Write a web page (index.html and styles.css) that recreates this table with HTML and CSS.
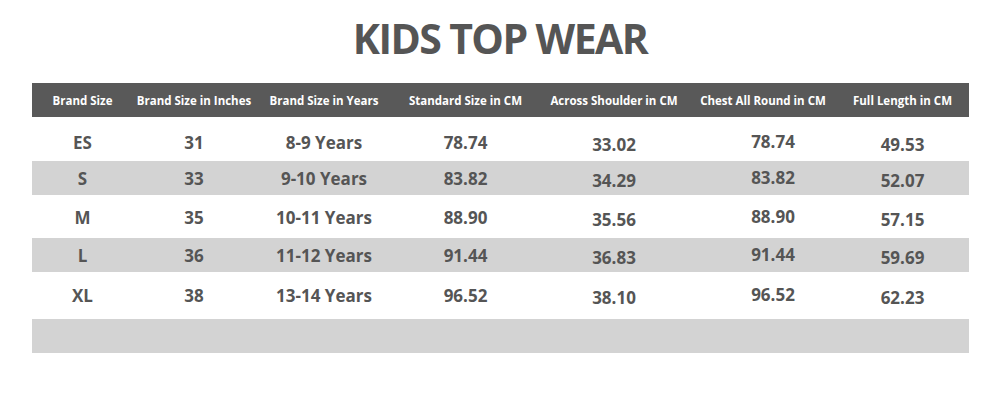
FILE: index.html
```html
<!DOCTYPE html>
<html>
<head>
<meta charset="utf-8">
<link rel="stylesheet" href="styles.css">
</head>
<body>
<div class="page">
  <h1 class="title">KIDS TOP WEAR</h1>
  <div class="table">
    <div class="row head">
      <div class="cell">Brand Size</div>
      <div class="cell">Brand Size in Inches</div>
      <div class="cell">Brand Size in Years</div>
      <div class="cell">Standard Size in CM</div>
      <div class="cell">Across Shoulder in CM</div>
      <div class="cell">Chest All Round in CM</div>
      <div class="cell">Full Length in CM</div>
    </div>
    <div class="row data r1">
      <div class="cell">ES</div>
      <div class="cell">31</div>
      <div class="cell">8-9 Years</div>
      <div class="cell">78.74</div>
      <div class="cell low">33.02</div>
      <div class="cell chest">78.74</div>
      <div class="cell low">49.53</div>
    </div>
    <div class="row data shade r2">
      <div class="cell">S</div>
      <div class="cell">33</div>
      <div class="cell">9-10 Years</div>
      <div class="cell">83.82</div>
      <div class="cell low">34.29</div>
      <div class="cell chest">83.82</div>
      <div class="cell low">52.07</div>
    </div>
    <div class="row data r3">
      <div class="cell">M</div>
      <div class="cell">35</div>
      <div class="cell">10-11 Years</div>
      <div class="cell">88.90</div>
      <div class="cell low">35.56</div>
      <div class="cell chest">88.90</div>
      <div class="cell low">57.15</div>
    </div>
    <div class="row data shade r4">
      <div class="cell">L</div>
      <div class="cell">36</div>
      <div class="cell">11-12 Years</div>
      <div class="cell">91.44</div>
      <div class="cell low">36.83</div>
      <div class="cell chest">91.44</div>
      <div class="cell low">59.69</div>
    </div>
    <div class="row data r5">
      <div class="cell">XL</div>
      <div class="cell">38</div>
      <div class="cell">13-14 Years</div>
      <div class="cell">96.52</div>
      <div class="cell low">38.10</div>
      <div class="cell chest">96.52</div>
      <div class="cell low">62.23</div>
    </div>
    <div class="row shade empty"></div>
  </div>
</div>
</body>
</html>
```

FILE: styles.css
```css
html, body {
  margin: 0;
  padding: 0;
  background: #ffffff;
}

.page {
  width: 1000px;
  height: 400px;
  font-family: "Open Sans", "Liberation Sans", sans-serif;
  color: #555555;
}

.title {
  margin: 0;
  padding-top: 18px;
  height: 83px;
  box-sizing: border-box;
  text-align: center;
  font-size: 41px;
  line-height: 41px;
  font-weight: 700;
  color: #555555;
  letter-spacing: -1.6px;
}

.table {
  margin-left: 32px;
  width: 937px;
}

.row {
  display: grid;
  grid-template-columns: 101px 122px 138px 145px 152px 146px 133px;
  align-items: center;
}

.cell {
  text-align: center;
  white-space: nowrap;
}

.head {
  background: #595959;
  color: #ffffff;
  height: 34px;
  font-size: 11.5px;
  font-weight: 700;
}

.data {
  font-size: 17px;
  font-weight: 700;
  color: #555555;
}

.shade {
  background: #d3d3d3;
}

.r1 { height: 44px; }
.r2 { height: 34px; }
.r3 { height: 43px; }
.r4 { height: 34px; }
.r5 { height: 47px; }
.empty { height: 34px; }

.r1 .cell { padding-top: 6px; }
.r3 .cell { padding-top: 2px; }
.r5 .cell { padding-top: 0; }

.low { position: relative; top: 2px; }
.chest { position: relative; left: 10px; top: -1px; }
```
